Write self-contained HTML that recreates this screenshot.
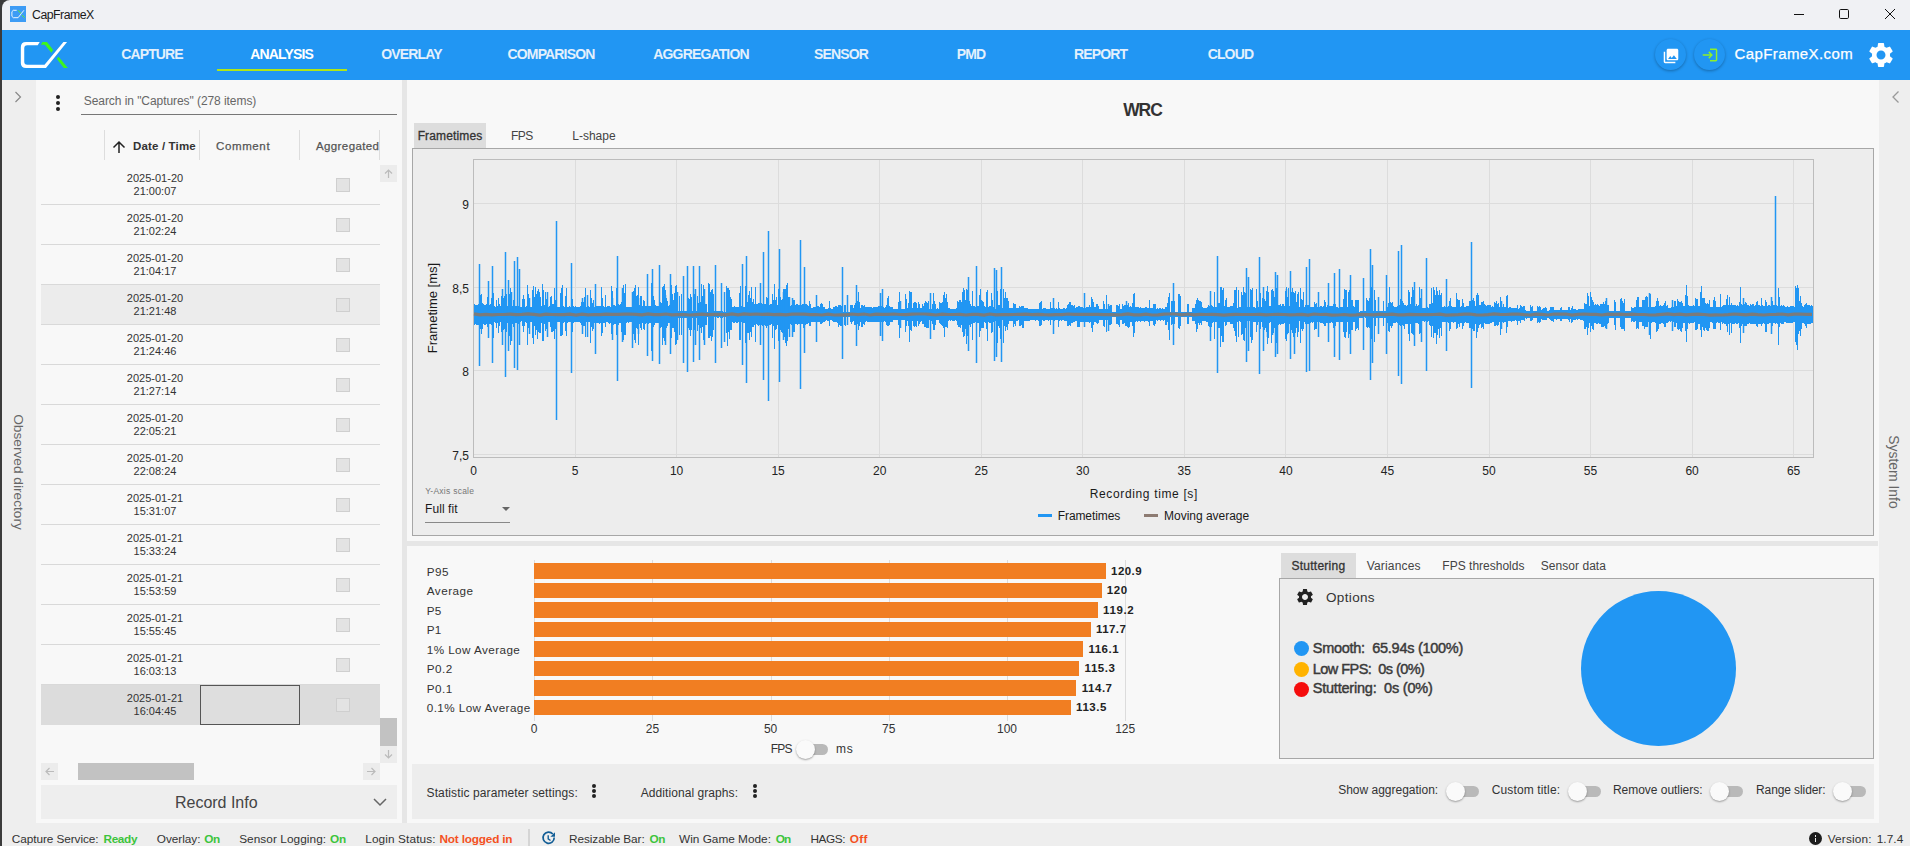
<!DOCTYPE html>
<html><head><meta charset="utf-8">
<style>
*{box-sizing:border-box;margin:0;padding:0}
html,body{width:1910px;height:846px;overflow:hidden;background:#eeeeee;font-family:"Liberation Sans",sans-serif;color:#333}
.a{position:absolute}
#edge{left:0;top:0;width:2px;height:846px;background:#3b3b3b}
#title{left:2px;top:0;width:1908px;height:30px;background:#f0f1f4;border-top-left-radius:8px}
#nav{left:2px;top:30px;width:1908px;height:50px;background:#2196f3}
.nv{position:absolute;top:46px;font-size:14px;font-weight:bold;color:#e3f0fc;white-space:nowrap;transform:translateX(-50%);letter-spacing:-0.85px}
#strip{left:2px;top:80px;width:34px;height:743px;background:#eeeeee}
#lp{left:36px;top:80px;width:366px;height:743px;background:#f8f8f8}
#sep{left:402px;top:80px;width:5px;height:743px;background:#e6e6e6}
#main{left:407px;top:80px;width:1472px;height:743px;background:#f8f8f8}
#rstrip{left:1879px;top:80px;width:31px;height:766px;background:#eeeeee}
.row{position:absolute;left:41px;width:339px;height:40px;border-bottom:1px solid #d9d9d9}
.row.hov{background:#ececec}
.row.sel{background:#dcdcdc;border-bottom:none}
.dt{position:absolute;left:64px;width:100px;top:7px;text-align:center;font-size:11px;line-height:13px;color:#333}
.cb{position:absolute;left:295px;top:13px;width:14px;height:14px;background:#e3e3e3;border:1px solid #cfcfcf}
.cmt{position:absolute;left:159px;top:0;width:100px;height:40px;border:1px solid #555;background:#dedede}
.st{position:absolute;top:831px;font-size:12px;color:#333;white-space:nowrap}
.g{color:#3cc43c;font-weight:bold}
.r{color:#f4511e;font-weight:bold}
.tk{font-size:12px;color:#222;white-space:nowrap}
.lg{font-size:14px;color:#333;white-space:nowrap;font-weight:bold;-webkit-text-stroke:0}
.dot3 i{display:block;width:4px;height:4px;border-radius:50%;background:#222;margin-bottom:1px}
.tg{font-size:12px;color:#333;white-space:nowrap}
.tr{width:28px;height:11px;border-radius:6px;background:#b9b9b9}
.kn{width:19px;height:19px;border-radius:50%;background:#fafafa;box-shadow:0 1px 2px rgba(0,0,0,.35)}
.bl{font-size:12px;color:#333;white-space:nowrap}
.bv{font-size:12px;color:#222;font-weight:bold;white-space:nowrap}
</style></head><body>
<div class="a" id="edge"></div>
<div class="a" style="left:0;top:0;width:10px;height:10px;background:#3b3b3b"></div>
<div class="a" id="title"></div>
<div class="a" id="nav"></div>
<!-- title bar -->
<div class="a" style="left:10px;top:6px;width:16px;height:16px;background:#3d9cf5"></div>
<svg class="a" style="left:10px;top:6px" width="16" height="16" viewBox="0 0 16 16">
 <path d="M6.7 4.3H3.3L1.9 5.7v4.6l1.4 1.4H8.1L13.9 4.3" fill="none" stroke="#fff" stroke-width="0.9"/>
 <path d="M8.1 4.3l2.7 3M12 9.1l2.6 2.6" fill="none" stroke="#5cf02a" stroke-width="1"/>
</svg>
<div class="a" style="left:32px;top:8px;font-size:12.3px;color:#1a1a1a;letter-spacing:-0.5px">CapFrameX</div>
<svg class="a" style="left:1790px;top:6px" width="110" height="18" viewBox="0 0 110 18">
 <path d="M4 8.5h10" stroke="#111" stroke-width="1"/>
 <rect x="49.5" y="3.5" width="9" height="9" rx="1.2" fill="none" stroke="#111" stroke-width="1"/>
 <path d="M95 3l10 10M105 3l-10 10" stroke="#111" stroke-width="1"/>
</svg>
<!-- logo -->
<svg class="a" style="left:16px;top:38px" width="56" height="34" viewBox="0 0 56 34">
 <path fill="#fff" d="M23.72 4.02H10.05Q4.82 4.02 4.82 9.25V24.92Q4.82 29.95 10.05 29.95H29.95L51.06 4.02H47.44L28.54 26.73H11.26Q8.24 26.73 8.24 23.72V10.25Q8.24 7.24 11.26 7.24H21.71Z"/>
 <path fill="#3ef51e" d="M24.92 6.63L26.53 4.02H30.95L37.19 12.06L35.38 14.87L28.94 6.83Z"/>
 <path fill="#3ef51e" d="M40.8 20.7L42.61 18.69L51.86 29.95H47.84Z"/>
</svg>
<div class="nv" style="left:152px">CAPTURE</div>
<div class="nv" style="left:281.7px;color:#fff">ANALYSIS</div>
<div class="a" style="left:217px;top:69px;width:130px;height:2px;background:#b0e617"></div>
<div class="nv" style="left:411.5px">OVERLAY</div>
<div class="nv" style="left:551px">COMPARISON</div>
<div class="nv" style="left:701px">AGGREGATION</div>
<div class="nv" style="left:841px">SENSOR</div>
<div class="nv" style="left:971px">PMD</div>
<div class="nv" style="left:1100.7px">REPORT</div>
<div class="nv" style="left:1230.4px">CLOUD</div>
<div class="a" style="left:1655px;top:39px;width:31px;height:31px;border-radius:50%;background:#2196f3;box-shadow:0 1px 3px rgba(0,0,0,.3)"></div>
<div class="a" style="left:1694px;top:39px;width:31px;height:31px;border-radius:50%;background:#2196f3;box-shadow:0 1px 3px rgba(0,0,0,.3)"></div>
<div class="a" style="left:1734.5px;top:45px;font-size:15px;color:#fff;letter-spacing:0.4px;-webkit-text-stroke:0.25px #fff">CapFrameX.com</div>

<svg class="a" style="left:1663px;top:48px" width="16" height="16" viewBox="1 1 22 22"><path fill="#fff" d="M22 16V4c0-1.1-.9-2-2-2H8c-1.1 0-2 .9-2 2v12c0 1.1.9 2 2 2h12c1.1 0 2-.9 2-2zm-11-4l2.03 2.71L16 11l4 5H8l3-4zM2 6v14c0 1.1.9 2 2 2h14v-2H4V6H2z"/></svg>
<svg class="a" style="left:1702px;top:47px" width="16" height="16" viewBox="1 1 22 22"><path fill="#8ef02a" d="M11 7L9.6 8.4l2.6 2.6H2v2h10.2l-2.6 2.6L11 17l5-5-5-5zm9 12h-8v2h8c1.1 0 2-.9 2-2V5c0-1.1-.9-2-2-2h-8v2h8v14z"/></svg>
<svg class="a" style="left:1866px;top:40px" width="30" height="30" viewBox="0 0 24 24"><path fill="#fff" d="M19.14 12.94c.04-.3.06-.61.06-.94 0-.32-.02-.64-.07-.94l2.03-1.58a.49.49 0 0 0 .12-.61l-1.92-3.32a.488.488 0 0 0-.59-.22l-2.39.96c-.5-.38-1.03-.7-1.62-.94l-.36-2.54a.484.484 0 0 0-.48-.41h-3.84c-.24 0-.43.17-.47.41l-.36 2.54c-.59.24-1.13.57-1.62.94l-2.39-.96c-.22-.08-.47 0-.59.22L2.74 8.87c-.12.21-.08.47.12.61l2.03 1.58c-.05.3-.09.63-.09.94s.02.64.07.94l-2.03 1.58a.49.49 0 0 0-.12.61l1.92 3.32c.12.22.37.29.59.22l2.39-.96c.5.38 1.03.7 1.62.94l.36 2.54c.05.24.24.41.48.41h3.84c.24 0 .44-.17.47-.41l.36-2.54c.59-.24 1.13-.56 1.62-.94l2.39.96c.22.08.47 0 .59-.22l1.92-3.32c.12-.22.07-.47-.12-.61l-2.01-1.58zM12 15.6c-1.98 0-3.6-1.62-3.6-3.6s1.62-3.6 3.6-3.6 3.6 1.62 3.6 3.6-1.62 3.6-3.6 3.6z"/></svg>
<div class="a" id="strip"></div>
<div class="a" id="lp"></div>
<div class="a" id="sep"></div>
<div class="a" id="main"></div>
<div class="a" id="rstrip"></div>

<div class="row" style="top:165px"><div class="dt">2025-01-20<br>21:00:07</div><div class="cb"></div></div>
<div class="row" style="top:205px"><div class="dt">2025-01-20<br>21:02:24</div><div class="cb"></div></div>
<div class="row" style="top:245px"><div class="dt">2025-01-20<br>21:04:17</div><div class="cb"></div></div>
<div class="row hov" style="top:285px"><div class="dt">2025-01-20<br>21:21:48</div><div class="cb"></div></div>
<div class="row" style="top:325px"><div class="dt">2025-01-20<br>21:24:46</div><div class="cb"></div></div>
<div class="row" style="top:365px"><div class="dt">2025-01-20<br>21:27:14</div><div class="cb"></div></div>
<div class="row" style="top:405px"><div class="dt">2025-01-20<br>22:05:21</div><div class="cb"></div></div>
<div class="row" style="top:445px"><div class="dt">2025-01-20<br>22:08:24</div><div class="cb"></div></div>
<div class="row" style="top:485px"><div class="dt">2025-01-21<br>15:31:07</div><div class="cb"></div></div>
<div class="row" style="top:525px"><div class="dt">2025-01-21<br>15:33:24</div><div class="cb"></div></div>
<div class="row" style="top:565px"><div class="dt">2025-01-21<br>15:53:59</div><div class="cb"></div></div>
<div class="row" style="top:605px"><div class="dt">2025-01-21<br>15:55:45</div><div class="cb"></div></div>
<div class="row" style="top:645px"><div class="dt">2025-01-21<br>16:03:13</div><div class="cb"></div></div>
<div class="row sel" style="top:685px"><div class="dt">2025-01-21<br>16:04:45</div><div class="cb"></div><div class="cmt"></div></div>

<!-- status bar -->
<div class="a" style="left:528px;top:829px;width:1.5px;height:17px;background:#d5d5d5"></div>
<svg class="a" style="left:541px;top:831px" width="16" height="15" viewBox="0 0 16 15"><path d="M13.2 6.5A5.6 5.6 0 1 1 11.8 3" fill="none" stroke="#135e96" stroke-width="1.7"/><path d="M14 1.2v4.6H9.4z" fill="#135e96"/><path d="M7.2 4.3v3.6l2.3 1.6" fill="none" stroke="#135e96" stroke-width="1.4"/></svg>
<div class="a" style="left:1809px;top:832px;width:13px;height:13px;border-radius:50%;background:#1e1e1e"></div>
<div class="a" style="left:1814.6px;top:835px;width:1.8px;height:1.8px;background:#eee"></div>
<div class="a" style="left:1814.6px;top:837.6px;width:1.8px;height:4.6px;background:#eee"></div>

<!-- left panel header -->
<svg class="a" style="left:13px;top:91px" width="10" height="12" viewBox="0 0 10 12"><path d="M2.5 1l5 5-5 5" fill="none" stroke="#888" stroke-width="1.2"/></svg>
<div class="a" style="left:56px;top:95px;width:4px;height:4px;border-radius:50%;background:#222"></div>
<div class="a" style="left:56px;top:101px;width:4px;height:4px;border-radius:50%;background:#222"></div>
<div class="a" style="left:56px;top:107px;width:4px;height:4px;border-radius:50%;background:#222"></div>
<div class="a" style="left:81px;top:114px;width:316px;height:1px;background:#777"></div>
<div class="a" style="left:104px;top:130px;width:1px;height:30px;background:#ddd"></div>
<div class="a" style="left:199px;top:130px;width:1px;height:30px;background:#ddd"></div>
<div class="a" style="left:299px;top:130px;width:1px;height:30px;background:#ddd"></div>
<div class="a" style="left:379px;top:130px;width:1px;height:30px;background:#ddd"></div>
<svg class="a" style="left:112px;top:140px" width="14" height="14" viewBox="0 0 14 14"><path d="M7 13V2M1.5 7.5L7 2l5.5 5.5" fill="none" stroke="#222" stroke-width="1.5"/></svg>
<div class="a" style="left:380px;top:165px;width:17px;height:17px;background:#ececec"></div>
<svg class="a" style="left:383px;top:168px" width="11" height="11" viewBox="0 0 11 11"><path d="M5.5 10V2M2 5.5L5.5 2 9 5.5" fill="none" stroke="#bbb" stroke-width="1.2"/></svg>
<div class="a" style="left:380px;top:718px;width:17px;height:28px;background:#c2c2c2"></div>
<div class="a" style="left:380px;top:746px;width:17px;height:17px;background:#ececec"></div>
<svg class="a" style="left:383px;top:749px" width="11" height="11" viewBox="0 0 11 11"><path d="M5.5 1v8M2 5.5L5.5 9 9 5.5" fill="none" stroke="#bbb" stroke-width="1.2"/></svg>
<div class="a" style="left:41px;top:763px;width:17px;height:17px;background:#ececec"></div>
<svg class="a" style="left:44px;top:766px" width="11" height="11" viewBox="0 0 11 11"><path d="M10 5.5H2M5.5 2L2 5.5 5.5 9" fill="none" stroke="#bbb" stroke-width="1.2"/></svg>
<div class="a" style="left:78px;top:763px;width:116px;height:17px;background:#c2c2c2"></div>
<div class="a" style="left:363px;top:763px;width:17px;height:17px;background:#ececec"></div>
<svg class="a" style="left:366px;top:766px" width="11" height="11" viewBox="0 0 11 11"><path d="M1 5.5h8M5.5 2L9 5.5 5.5 9" fill="none" stroke="#bbb" stroke-width="1.2"/></svg>
<div class="a" style="left:41px;top:785px;width:356px;height:34px;background:#eeeeee"></div>
<svg class="a" style="left:372px;top:797px" width="16" height="10" viewBox="0 0 16 10"><path d="M2 2l6 6 6-6" fill="none" stroke="#666" stroke-width="1.5"/></svg>
<div class="a" style="left:-40px;top:464px;width:116px;transform:rotate(90deg);font-size:13.7px;color:#666;white-space:nowrap;text-align:center;line-height:16px">Observed directory</div>
<!-- right strip -->
<svg class="a" style="left:1890px;top:90px" width="12" height="14" viewBox="0 0 12 14"><path d="M8.5 1.5L3 7l5.5 5.5" fill="none" stroke="#999" stroke-width="1.3"/></svg>
<div class="a" style="left:1857px;top:464px;width:74px;transform:rotate(90deg);font-size:13.9px;color:#666;white-space:nowrap;text-align:center;line-height:16px">System Info</div>

<!-- main header -->
<div class="a" style="left:414px;top:123px;width:72px;height:25px;background:#dddddd"></div>
<!-- chart box -->
<div class="a" style="left:412px;top:148px;width:1462px;height:388px;background:#ededed;border:1px solid #a7a7a7"></div>
<div class="a" style="left:473px;top:159px;height:299px;border:1px solid #bcbcbc;width:1341px"></div>
<div class="a tk" style="left:473.5px;top:464px;transform:translateX(-50%)">0</div>
<div class="a" style="left:574.5px;top:160px;width:1px;height:297px;background:#dcdcdc"></div>
<div class="a tk" style="left:575.0px;top:464px;transform:translateX(-50%)">5</div>
<div class="a" style="left:676.1px;top:160px;width:1px;height:297px;background:#dcdcdc"></div>
<div class="a tk" style="left:676.6px;top:464px;transform:translateX(-50%)">10</div>
<div class="a" style="left:777.6px;top:160px;width:1px;height:297px;background:#dcdcdc"></div>
<div class="a tk" style="left:778.1px;top:464px;transform:translateX(-50%)">15</div>
<div class="a" style="left:879.2px;top:160px;width:1px;height:297px;background:#dcdcdc"></div>
<div class="a tk" style="left:879.7px;top:464px;transform:translateX(-50%)">20</div>
<div class="a" style="left:980.8px;top:160px;width:1px;height:297px;background:#dcdcdc"></div>
<div class="a tk" style="left:981.2px;top:464px;transform:translateX(-50%)">25</div>
<div class="a" style="left:1082.3px;top:160px;width:1px;height:297px;background:#dcdcdc"></div>
<div class="a tk" style="left:1082.8px;top:464px;transform:translateX(-50%)">30</div>
<div class="a" style="left:1183.8px;top:160px;width:1px;height:297px;background:#dcdcdc"></div>
<div class="a tk" style="left:1184.3px;top:464px;transform:translateX(-50%)">35</div>
<div class="a" style="left:1285.4px;top:160px;width:1px;height:297px;background:#dcdcdc"></div>
<div class="a tk" style="left:1285.9px;top:464px;transform:translateX(-50%)">40</div>
<div class="a" style="left:1386.9px;top:160px;width:1px;height:297px;background:#dcdcdc"></div>
<div class="a tk" style="left:1387.4px;top:464px;transform:translateX(-50%)">45</div>
<div class="a" style="left:1488.5px;top:160px;width:1px;height:297px;background:#dcdcdc"></div>
<div class="a tk" style="left:1489.0px;top:464px;transform:translateX(-50%)">50</div>
<div class="a" style="left:1590.0px;top:160px;width:1px;height:297px;background:#dcdcdc"></div>
<div class="a tk" style="left:1590.5px;top:464px;transform:translateX(-50%)">55</div>
<div class="a" style="left:1691.6px;top:160px;width:1px;height:297px;background:#dcdcdc"></div>
<div class="a tk" style="left:1692.1px;top:464px;transform:translateX(-50%)">60</div>
<div class="a" style="left:1793.1px;top:160px;width:1px;height:297px;background:#dcdcdc"></div>
<div class="a tk" style="left:1793.6px;top:464px;transform:translateX(-50%)">65</div>
<div class="a" style="left:474px;top:203.4px;width:1339px;height:1px;background:#dcdcdc"></div>
<div class="a tk" style="right:1441px;top:198.4px">9</div>
<div class="a" style="left:474px;top:286.6px;width:1339px;height:1px;background:#dcdcdc"></div>
<div class="a tk" style="right:1441px;top:281.6px">8,5</div>
<div class="a" style="left:474px;top:370.3px;width:1339px;height:1px;background:#dcdcdc"></div>
<div class="a tk" style="right:1441px;top:365.3px">8</div>
<div class="a" style="left:474px;top:453.5px;width:1339px;height:1px;background:#dcdcdc"></div>
<div class="a tk" style="right:1441px;top:448.5px">7,5</div>
<div class="a" style="left:425px;top:299.7px;width:16px;height:16px;transform:rotate(-90deg);font-size:13px;color:#1a1a1a;line-height:16px"><span style="position:absolute;left:50%;top:50%;transform:translate(-50%,-50%);white-space:nowrap">Frametime [ms]</span></div>
<svg class="a" style="left:501px;top:506px" width="10" height="6" viewBox="0 0 10 6"><path d="M1 1h8L5 5z" fill="#666"/></svg>
<div class="a" style="left:425px;top:522px;width:85px;height:1px;background:#888"></div>
<div class="a" style="left:1038px;top:514px;width:14px;height:3px;background:#2196f3"></div>
<div class="a" style="left:1144px;top:514px;width:14px;height:3px;background:#8d7b72"></div>
<div class="a" style="left:83.76px;top:95.04px;font-size:12px;line-height:12px;font-weight:400;color:#666;letter-spacing:-0.065px;white-space:pre;">Search in "Captures" (278 items)</div>
<div class="a" style="left:132.98px;top:140.87px;font-size:11.5px;line-height:11.5px;font-weight:700;color:#333;letter-spacing:0.158px;white-space:pre;">Date / Time</div>
<div class="a" style="left:215.98px;top:141.17px;font-size:11.5px;line-height:11.5px;font-weight:400;color:#555;letter-spacing:0.629px;white-space:pre;-webkit-text-stroke:0.25px #555;">Comment</div>
<div class="a" style="left:315.98px;top:141.17px;font-size:11.5px;line-height:11.5px;font-weight:400;color:#555;letter-spacing:0.396px;white-space:pre;-webkit-text-stroke:0.25px #555;">Aggregated</div>
<div class="a" style="left:1123.21px;top:101.89px;font-size:17.5px;line-height:17.5px;font-weight:700;color:#333;letter-spacing:-1.111px;white-space:pre;">WRC</div>
<div class="a" style="left:417.66px;top:129.74px;font-size:12px;line-height:12px;font-weight:400;color:#333;letter-spacing:0.137px;white-space:pre;-webkit-text-stroke:0.3px #333;">Frametimes</div>
<div class="a" style="left:511.06px;top:129.74px;font-size:12px;line-height:12px;font-weight:400;color:#444;letter-spacing:-0.582px;white-space:pre;">FPS</div>
<div class="a" style="left:572.26px;top:129.74px;font-size:12px;line-height:12px;font-weight:400;color:#444;letter-spacing:0.001px;white-space:pre;">L-shape</div>
<div class="a" style="left:1089.66px;top:487.94px;font-size:12px;line-height:12px;font-weight:400;color:#1a1a1a;letter-spacing:0.646px;white-space:pre;">Recording time [s]</div>
<div class="a" style="left:1057.76px;top:509.54px;font-size:12px;line-height:12px;font-weight:400;color:#1a1a1a;letter-spacing:-0.096px;white-space:pre;">Frametimes</div>
<div class="a" style="left:1164.06px;top:509.54px;font-size:12px;line-height:12px;font-weight:400;color:#1a1a1a;letter-spacing:-0.024px;white-space:pre;">Moving average</div>
<div class="a" style="left:425.22px;top:486.80px;font-size:8.5px;line-height:8.5px;font-weight:400;color:#777;letter-spacing:0.253px;white-space:pre;">Y-Axis scale</div>
<div class="a" style="left:425.06px;top:503.04px;font-size:12px;line-height:12px;font-weight:400;color:#1a1a1a;letter-spacing:0.066px;white-space:pre;">Full fit</div>
<div class="a" style="left:174.98px;top:794.76px;font-size:16px;line-height:16px;font-weight:400;color:#444;letter-spacing:-0.008px;white-space:pre;">Record Info</div>
<!-- horizontal separator -->
<div class="a" style="left:407px;top:541px;width:1471px;height:5px;background:#e6e6e6"></div>

<!-- bar chart -->
<div class="a" style="left:652.4px;top:560px;width:1px;height:161px;background:#dcdcdc"></div>
<div class="a" style="left:770.6px;top:560px;width:1px;height:161px;background:#dcdcdc"></div>
<div class="a" style="left:888.8px;top:560px;width:1px;height:161px;background:#dcdcdc"></div>
<div class="a" style="left:1007.0px;top:560px;width:1px;height:161px;background:#dcdcdc"></div>
<div class="a" style="left:1125.2px;top:560px;width:1px;height:161px;background:#dcdcdc"></div>
<div class="a tk" style="left:534.2px;top:722px;transform:translateX(-50%);color:#333">0</div>
<div class="a tk" style="left:652.4px;top:722px;transform:translateX(-50%);color:#333">25</div>
<div class="a tk" style="left:770.6px;top:722px;transform:translateX(-50%);color:#333">50</div>
<div class="a tk" style="left:888.8px;top:722px;transform:translateX(-50%);color:#333">75</div>
<div class="a tk" style="left:1007.0px;top:722px;transform:translateX(-50%);color:#333">100</div>
<div class="a tk" style="left:1125.2px;top:722px;transform:translateX(-50%);color:#333">125</div>
<div class="a" style="left:534px;top:560px;width:1px;height:161px;background:#dcdcdc"></div>
<div class="a" style="left:534.2px;top:563.2px;width:571.6px;height:15.6px;background:#f17e22"></div>
<div class="a" style="left:534.2px;top:582.7px;width:567.4px;height:15.6px;background:#f17e22"></div>
<div class="a" style="left:534.2px;top:602.2px;width:563.6px;height:15.6px;background:#f17e22"></div>
<div class="a" style="left:534.2px;top:621.7px;width:556.5px;height:15.6px;background:#f17e22"></div>
<div class="a" style="left:534.2px;top:641.2px;width:548.9px;height:15.6px;background:#f17e22"></div>
<div class="a" style="left:534.2px;top:660.7px;width:545.1px;height:15.6px;background:#f17e22"></div>
<div class="a" style="left:534.2px;top:680.2px;width:542.3px;height:15.6px;background:#f17e22"></div>
<div class="a" style="left:534.2px;top:699.7px;width:536.6px;height:15.6px;background:#f17e22"></div>
<div class="a" style="left:800px;top:744px;width:28px;height:11px;border-radius:6px;background:#b9b9b9"></div>
<div class="a" style="left:796px;top:740px;width:19px;height:19px;border-radius:50%;background:#fafafa;box-shadow:0 1px 2px rgba(0,0,0,.35)"></div>
<!-- stuttering panel -->
<div class="a" style="left:1281px;top:553px;width:75px;height:25px;background:#dddddd"></div>
<div class="a" style="left:1279px;top:578px;width:595px;height:181px;background:#ededed;border:1px solid #a7a7a7"></div>
<svg class="a" style="left:1295.2px;top:587.1px" width="20" height="20" viewBox="0 0 24 24"><path fill="#222" d="M19.14 12.94c.04-.3.06-.61.06-.94 0-.32-.02-.64-.07-.94l2.030-1.58a.49.49 0 0 0 .12-.61l-1.92-3.32a.488.488 0 0 0-.59-.22l-2.39.96c-.5-.38-1.03-.7-1.62-.94l-.36-2.54a.484.484 0 0 0-.48-.41h-3.84c-.24 0-.43.17-.47.41l-.36 2.54c-.59.24-1.13.57-1.62.94l-2.39-.96c-.22-.08-.47 0-.59.22L2.74 8.87c-.12.21-.08.47.12.61l2.03 1.58c-.05.3-.09.63-.09.94s.02.64.07.94l-2.03 1.58a.49.49 0 0 0-.12.61l1.92 3.32c.12.22.37.29.59.22l2.39-.96c.5.38 1.03.7 1.62.94l.36 2.54c.05.24.24.41.48.41h3.84c.24 0 .44-.17.47-.41l.36-2.54c.59-.24 1.13-.56 1.62-.94l2.39.96c.22.08.47 0 .59-.22l1.92-3.32c.12-.22.07-.47-.12-.61l-2.01-1.58zM12 15.6c-1.98 0-3.6-1.62-3.6-3.6s1.620-3.6 3.6-3.6 3.6 1.62 3.6 3.6-1.62 3.6-3.6 3.6z"/></svg>
<div class="a" style="left:1293.5px;top:640.5px;width:15px;height:15px;border-radius:50%;background:#2196f3"></div>
<div class="a" style="left:1293.5px;top:661.5px;width:15px;height:15px;border-radius:50%;background:#ffb300"></div>
<div class="a" style="left:1293.5px;top:682px;width:15px;height:15px;border-radius:50%;background:#f50d0d"></div>
<div class="a" style="left:1581px;top:591px;width:155px;height:155px;border-radius:50%;background:#2196f3"></div>
<!-- bottom toolbar -->
<div class="a" style="left:412px;top:764px;width:1462px;height:55px;background:#ededed"></div>
<div class="a dot3" style="left:592px;top:784px"><i></i><i></i><i></i></div>
<div class="a dot3" style="left:752.5px;top:784px"><i></i><i></i><i></i></div>

<div class="a tr" style="left:1451px;top:786px"></div><div class="a kn" style="left:1446px;top:782px"></div>

<div class="a tr" style="left:1573px;top:786px"></div><div class="a kn" style="left:1568px;top:782px"></div>

<div class="a tr" style="left:1715px;top:786px"></div><div class="a kn" style="left:1710px;top:782px"></div>

<div class="a tr" style="left:1838px;top:786px"></div><div class="a kn" style="left:1833px;top:782px"></div>

<div class="a" style="left:770.86px;top:743.14px;font-size:12px;line-height:12px;font-weight:400;color:#333;letter-spacing:-0.832px;white-space:pre;">FPS</div>
<div class="a" style="left:835.96px;top:743.14px;font-size:12px;line-height:12px;font-weight:400;color:#333;letter-spacing:0.880px;white-space:pre;">ms</div>
<div class="a" style="left:1291.56px;top:559.94px;font-size:12px;line-height:12px;font-weight:400;color:#333;letter-spacing:0.245px;white-space:pre;-webkit-text-stroke:0.3px #333;">Stuttering</div>
<div class="a" style="left:1366.66px;top:559.94px;font-size:12px;line-height:12px;font-weight:400;color:#444;letter-spacing:0.187px;white-space:pre;">Variances</div>
<div class="a" style="left:1442.36px;top:559.94px;font-size:12px;line-height:12px;font-weight:400;color:#444;letter-spacing:0.003px;white-space:pre;">FPS thresholds</div>
<div class="a" style="left:1540.76px;top:559.94px;font-size:12px;line-height:12px;font-weight:400;color:#444;letter-spacing:0.046px;white-space:pre;">Sensor data</div>
<div class="a" style="left:1325.99px;top:590.57px;font-size:13.5px;line-height:13.5px;font-weight:400;color:#333;letter-spacing:0.347px;white-space:pre;">Options</div>
<div class="a" style="left:1312.75px;top:640.63px;font-size:14.5px;line-height:14.5px;font-weight:400;color:#3a3a3a;letter-spacing:-0.280px;white-space:pre;-webkit-text-stroke:0.45px #3a3a3a;">Smooth:  65.94s (100%)</div>
<div class="a" style="left:1312.75px;top:661.53px;font-size:14.5px;line-height:14.5px;font-weight:400;color:#3a3a3a;letter-spacing:-0.542px;white-space:pre;-webkit-text-stroke:0.45px #3a3a3a;">Low FPS:  0s (0%)</div>
<div class="a" style="left:1312.75px;top:681.43px;font-size:14.5px;line-height:14.5px;font-weight:400;color:#3a3a3a;letter-spacing:-0.216px;white-space:pre;-webkit-text-stroke:0.45px #3a3a3a;">Stuttering:  0s (0%)</div>
<div class="a" style="left:426.56px;top:786.64px;font-size:12px;line-height:12px;font-weight:400;color:#333;letter-spacing:0.111px;white-space:pre;">Statistic parameter settings:</div>
<div class="a" style="left:640.66px;top:786.64px;font-size:12px;line-height:12px;font-weight:400;color:#333;letter-spacing:0.077px;white-space:pre;">Additional graphs:</div>
<div class="a" style="left:1338.16px;top:784.44px;font-size:12px;line-height:12px;font-weight:400;color:#333;letter-spacing:-0.006px;white-space:pre;">Show aggregation:</div>
<div class="a" style="left:1491.66px;top:784.44px;font-size:12px;line-height:12px;font-weight:400;color:#333;letter-spacing:0.141px;white-space:pre;">Custom title:</div>
<div class="a" style="left:1612.96px;top:784.44px;font-size:12px;line-height:12px;font-weight:400;color:#333;letter-spacing:-0.031px;white-space:pre;">Remove outliers:</div>
<div class="a" style="left:1756.06px;top:784.44px;font-size:12px;line-height:12px;font-weight:400;color:#333;letter-spacing:-0.103px;white-space:pre;">Range slider:</div>
<div class="a" style="left:426.77px;top:565.90px;font-size:11.7px;line-height:11.7px;font-weight:400;color:#333;letter-spacing:0.528px;white-space:pre;">P95</div>
<div class="a" style="left:1111.10px;top:565.87px;font-size:11.5px;line-height:11.5px;font-weight:700;color:#222;letter-spacing:0.438px;white-space:pre;">120.9</div>
<div class="a" style="left:426.77px;top:585.35px;font-size:11.7px;line-height:11.7px;font-weight:400;color:#333;letter-spacing:0.504px;white-space:pre;">Average</div>
<div class="a" style="left:1106.84px;top:585.32px;font-size:11.5px;line-height:11.5px;font-weight:700;color:#222;letter-spacing:0.624px;white-space:pre;">120</div>
<div class="a" style="left:426.77px;top:604.80px;font-size:11.7px;line-height:11.7px;font-weight:400;color:#333;letter-spacing:0.156px;white-space:pre;">P5</div>
<div class="a" style="left:1103.06px;top:604.77px;font-size:11.5px;line-height:11.5px;font-weight:700;color:#222;letter-spacing:0.620px;white-space:pre;">119.2</div>
<div class="a" style="left:426.77px;top:624.25px;font-size:11.7px;line-height:11.7px;font-weight:400;color:#333;letter-spacing:0.156px;white-space:pre;">P1</div>
<div class="a" style="left:1095.97px;top:624.22px;font-size:11.5px;line-height:11.5px;font-weight:700;color:#222;letter-spacing:0.420px;white-space:pre;">117.7</div>
<div class="a" style="left:426.77px;top:643.70px;font-size:11.7px;line-height:11.7px;font-weight:400;color:#333;letter-spacing:0.426px;white-space:pre;">1% Low Average</div>
<div class="a" style="left:1088.40px;top:643.67px;font-size:11.5px;line-height:11.5px;font-weight:700;color:#222;letter-spacing:0.520px;white-space:pre;">116.1</div>
<div class="a" style="left:426.77px;top:663.15px;font-size:11.7px;line-height:11.7px;font-weight:400;color:#333;letter-spacing:0.469px;white-space:pre;">P0.2</div>
<div class="a" style="left:1084.62px;top:663.12px;font-size:11.5px;line-height:11.5px;font-weight:700;color:#222;letter-spacing:0.520px;white-space:pre;">115.3</div>
<div class="a" style="left:426.77px;top:682.60px;font-size:11.7px;line-height:11.7px;font-weight:400;color:#333;letter-spacing:0.469px;white-space:pre;">P0.1</div>
<div class="a" style="left:1081.78px;top:682.57px;font-size:11.5px;line-height:11.5px;font-weight:700;color:#222;letter-spacing:0.520px;white-space:pre;">114.7</div>
<div class="a" style="left:426.77px;top:702.05px;font-size:11.7px;line-height:11.7px;font-weight:400;color:#333;letter-spacing:0.414px;white-space:pre;">0.1% Low Average</div>
<div class="a" style="left:1076.11px;top:702.02px;font-size:11.5px;line-height:11.5px;font-weight:700;color:#222;letter-spacing:0.520px;white-space:pre;">113.5</div>

<div class="a" style="left:11.77px;top:833.61px;font-size:11.8px;line-height:11.8px;font-weight:400;color:#333;letter-spacing:-0.074px;white-space:pre;">Capture Service:</div>
<div class="a" style="left:103.47px;top:833.61px;font-size:11.8px;line-height:11.8px;font-weight:700;color:#3cc43c;letter-spacing:-0.340px;white-space:pre;">Ready</div>
<div class="a" style="left:156.77px;top:833.61px;font-size:11.8px;line-height:11.8px;font-weight:400;color:#333;letter-spacing:-0.023px;white-space:pre;">Overlay:</div>
<div class="a" style="left:204.27px;top:833.61px;font-size:11.8px;line-height:11.8px;font-weight:700;color:#3cc43c;letter-spacing:-0.529px;white-space:pre;">On</div>
<div class="a" style="left:239.17px;top:833.61px;font-size:11.8px;line-height:11.8px;font-weight:400;color:#333;letter-spacing:0.074px;white-space:pre;">Sensor Logging:</div>
<div class="a" style="left:329.97px;top:833.61px;font-size:11.8px;line-height:11.8px;font-weight:700;color:#3cc43c;letter-spacing:-0.129px;white-space:pre;">On</div>
<div class="a" style="left:365.27px;top:833.61px;font-size:11.8px;line-height:11.8px;font-weight:400;color:#333;letter-spacing:0.116px;white-space:pre;">Login Status:</div>
<div class="a" style="left:439.47px;top:833.61px;font-size:11.8px;line-height:11.8px;font-weight:700;color:#f4511e;letter-spacing:-0.191px;white-space:pre;">Not logged in</div>
<div class="a" style="left:569.07px;top:833.61px;font-size:11.8px;line-height:11.8px;font-weight:400;color:#333;letter-spacing:-0.081px;white-space:pre;">Resizable Bar:</div>
<div class="a" style="left:649.47px;top:833.61px;font-size:11.8px;line-height:11.8px;font-weight:700;color:#3cc43c;letter-spacing:-0.329px;white-space:pre;">On</div>
<div class="a" style="left:679.07px;top:833.61px;font-size:11.8px;line-height:11.8px;font-weight:400;color:#333;letter-spacing:0.005px;white-space:pre;">Win Game Mode:</div>
<div class="a" style="left:775.67px;top:833.61px;font-size:11.8px;line-height:11.8px;font-weight:700;color:#3cc43c;letter-spacing:-0.929px;white-space:pre;">On</div>
<div class="a" style="left:810.47px;top:833.61px;font-size:11.8px;line-height:11.8px;font-weight:400;color:#333;letter-spacing:-0.414px;white-space:pre;">HAGS:</div>
<div class="a" style="left:849.77px;top:833.61px;font-size:11.8px;line-height:11.8px;font-weight:700;color:#f4511e;letter-spacing:0.258px;white-space:pre;">Off</div>
<div class="a" style="left:1827.67px;top:833.61px;font-size:11.8px;line-height:11.8px;font-weight:400;color:#333;letter-spacing:0.189px;white-space:pre;">Version:</div>
<div class="a" style="left:1876.67px;top:833.61px;font-size:11.8px;line-height:11.8px;font-weight:400;color:#333;letter-spacing:0.103px;white-space:pre;">1.7.4</div>
<svg class="a" style="left:0;top:0" width="1910" height="846" viewBox="0 0 1910 846">
<g fill="none" stroke="#2196f3">
<path stroke-width="1" shape-rendering="crispEdges" d="M474.5 304V325M475.5 305V324M476.5 305V325M477.5 305V325M478.5 304V325M479.5 305V324M480.5 303V329M481.5 301V328M482.5 303V329M483.5 304V324M484.5 305V325M485.5 305V325M486.5 304V324M487.5 297V327M488.5 304V325M489.5 305V324M490.5 304V324M491.5 307V322M492.5 306V323M493.5 307V323M494.5 306V322M495.5 307V323M496.5 305V324M497.5 306V323M498.5 301V326M499.5 304V326M500.5 306V322M501.5 296V332M502.5 297V333M503.5 298V330M504.5 296V329M505.5 306V323M506.5 306V323M507.5 306V323M508.5 298V331M509.5 299V329M510.5 298V328M511.5 299V331M512.5 306V324M513.5 300V327M514.5 306V323M515.5 306V323M516.5 306V323M517.5 304V329M518.5 306V324M519.5 307V321M520.5 307V322M521.5 307V321M522.5 299V326M523.5 300V326M524.5 299V326M525.5 307V322M526.5 306V323M527.5 299V329M528.5 300V328M529.5 308V322M530.5 307V322M531.5 307V322M532.5 307V322M533.5 302V326M534.5 303V326M535.5 305V323M536.5 306V323M537.5 305V323M538.5 305V323M539.5 305V323M540.5 305V324M541.5 306V323M542.5 305V323M543.5 305V324M544.5 305V324M545.5 306V323M546.5 305V323M547.5 307V322M548.5 307V322M549.5 306V322M550.5 307V322M551.5 302V332M552.5 304V332M553.5 304V331M554.5 307V322M555.5 303V329M556.5 301V330M557.5 307V322M558.5 307V322M559.5 307V322M560.5 307V322M561.5 306V322M562.5 307V323M563.5 306V323M564.5 307V322M565.5 307V322M566.5 306V323M567.5 307V323M568.5 307V322M569.5 306V322M570.5 307V322M571.5 301V332M572.5 299V332M573.5 306V323M574.5 307V322M575.5 306V322M576.5 307V322M577.5 307V322M578.5 307V322M579.5 307V322M580.5 306V323M581.5 302V325M582.5 302V325M583.5 302V326M584.5 303V326M585.5 306V323M586.5 307V322M587.5 307V322M588.5 306V322M589.5 307V322M590.5 307V323M591.5 307V323M592.5 303V331M593.5 300V329M594.5 307V323M595.5 307V323M596.5 306V323M597.5 306V323M598.5 306V323M599.5 306V324M600.5 306V323M601.5 306V323M602.5 307V323M603.5 306V323M604.5 307V323M605.5 306V322M606.5 307V322M607.5 306V322M608.5 306V323M609.5 306V324M610.5 307V323M611.5 305V325M612.5 305V324M613.5 305V325M614.5 305V324M615.5 306V324M616.5 305V324M617.5 304V323M618.5 304V325M619.5 305V323M620.5 304V323M621.5 302V332M622.5 306V323M623.5 306V324M624.5 300V330M625.5 299V331M626.5 307V323M627.5 307V322M628.5 307V323M629.5 307V322M630.5 307V322M631.5 307V322M632.5 307V322M633.5 301V327M634.5 303V326M635.5 302V327M636.5 302V328M637.5 304V324M638.5 300V330M639.5 305V324M640.5 296V328M641.5 296V330M642.5 306V323M643.5 300V329M644.5 301V330M645.5 306V324M646.5 306V323M647.5 306V323M648.5 306V324M649.5 306V323M650.5 306V323M651.5 305V324M652.5 297V332M653.5 299V327M654.5 300V325M655.5 305V323M656.5 306V323M657.5 306V323M658.5 306V323M659.5 306V322M660.5 302V328M661.5 303V327M662.5 303V330M663.5 302V327M664.5 306V323M665.5 306V323M666.5 298V328M667.5 301V326M668.5 306V323M669.5 305V323M670.5 305V324M671.5 305V324M672.5 306V324M673.5 306V324M674.5 305V323M675.5 305V323M676.5 311V318M677.5 311V318M678.5 311V318M679.5 311V318M680.5 311V318M681.5 311V318M682.5 311V318M683.5 311V318M684.5 311V318M685.5 311V318M686.5 311V318M687.5 311V318M688.5 298V328M689.5 299V330M690.5 299V330M691.5 311V318M692.5 311V318M693.5 311V318M694.5 311V318M695.5 311V318M696.5 311V318M697.5 296V331M698.5 303V325M699.5 304V325M700.5 302V328M701.5 303V329M702.5 304V327M703.5 304V326M704.5 303V324M705.5 304V325M706.5 304V325M707.5 312V317M708.5 312V317M709.5 311V317M710.5 300V330M711.5 298V332M712.5 300V331M713.5 312V318M714.5 311V317M715.5 312V317M716.5 311V317M717.5 311V318M718.5 311V318M719.5 311V317M720.5 311V318M721.5 311V317M722.5 311V318M723.5 312V317M724.5 311V317M725.5 312V317M726.5 311V317M727.5 306V322M728.5 298V329M729.5 299V329M730.5 297V330M731.5 299V330M732.5 307V322M733.5 307V323M734.5 306V323M735.5 307V322M736.5 307V323M737.5 307V323M738.5 307V322M739.5 306V323M740.5 307V323M741.5 306V322M742.5 307V323M743.5 307V323M744.5 307V323M745.5 307V323M746.5 306V322M747.5 302V333M748.5 304V333M749.5 301V332M750.5 307V323M751.5 300V328M752.5 302V327M753.5 299V327M754.5 304V325M755.5 303V324M756.5 304V324M757.5 304V325M758.5 303V326M759.5 303V325M760.5 304V324M761.5 303V325M762.5 304V326M763.5 303V326M764.5 304V325M765.5 304V326M766.5 297V328M767.5 298V326M768.5 304V326M769.5 305V325M770.5 304V325M771.5 304V324M772.5 304V324M773.5 306V325M774.5 297V332M775.5 300V330M776.5 297V329M777.5 305V325M778.5 304V324M779.5 305V323M780.5 297V330M781.5 306V324M782.5 305V324M783.5 305V324M784.5 305V324M785.5 304V324M786.5 297V329M787.5 297V330M788.5 297V329M789.5 300V329M790.5 306V324M791.5 305V325M792.5 301V333M793.5 300V332M794.5 300V332M795.5 305V324M796.5 304V324M797.5 304V325M798.5 305V324M799.5 305V324M800.5 305V324M801.5 305V324M802.5 304V324M803.5 304V328M804.5 306V324M805.5 304V325M806.5 304V324M807.5 305V324M808.5 306V323M809.5 301V326M810.5 304V326M811.5 308V322M812.5 308V322M813.5 307V322M814.5 307V322M815.5 307V322M816.5 307V322M817.5 306V322M818.5 306V322M819.5 307V322M820.5 304V324M821.5 303V324M822.5 304V323M823.5 307V322M824.5 307V322M825.5 309V321M826.5 309V320M827.5 309V321M828.5 308V321M829.5 309V320M830.5 308V320M831.5 309V320M832.5 309V321M833.5 307V322M834.5 307V322M835.5 306V322M836.5 306V322M837.5 307V323M838.5 305V327M839.5 305V325M840.5 305V326M841.5 306V326M842.5 312V317M843.5 312V317M844.5 305V325M845.5 305V326M846.5 312V317M847.5 312V317M848.5 312V317M849.5 312V317M850.5 305V322M851.5 305V324M852.5 305V322M853.5 308V321M854.5 305V325M855.5 304V325M856.5 304V325M857.5 303V323M858.5 308V322M859.5 302V326M860.5 308V322M861.5 305V327M862.5 305V327M863.5 306V324M864.5 305V325M865.5 307V322M866.5 307V321M867.5 307V322M868.5 307V322M869.5 307V322M870.5 307V322M871.5 307V322M872.5 308V322M873.5 307V322M874.5 307V322M875.5 307V322M876.5 307V322M877.5 307V322M878.5 306V322M879.5 306V322M880.5 307V322M881.5 306V322M882.5 307V322M883.5 307V322M884.5 308V321M885.5 307V322M886.5 305V325M887.5 306V324M888.5 306V324M889.5 306V325M890.5 307V322M891.5 307V322M892.5 307V322M893.5 309V320M894.5 309V320M895.5 309V320M896.5 309V320M897.5 309V320M898.5 302V325M899.5 309V320M900.5 309V320M901.5 309V320M902.5 309V320M903.5 309V320M904.5 309V320M905.5 309V320M906.5 309V320M907.5 308V321M908.5 308V321M909.5 308V321M910.5 308V321M911.5 307V321M912.5 308V321M913.5 303V326M914.5 302V327M915.5 302V326M916.5 303V327M917.5 308V321M918.5 302V326M919.5 304V324M920.5 308V322M921.5 308V321M922.5 304V324M923.5 306V324M924.5 303V327M925.5 301V327M926.5 302V328M927.5 303V328M928.5 301V328M929.5 309V320M930.5 309V321M931.5 309V321M932.5 304V324M933.5 305V324M934.5 304V324M935.5 304V325M936.5 309V320M937.5 308V320M938.5 309V320M939.5 302V323M940.5 303V324M941.5 303V325M942.5 302V326M943.5 302V325M944.5 303V324M945.5 309V320M946.5 307V326M947.5 305V327M948.5 308V321M949.5 308V320M950.5 309V321M951.5 309V320M952.5 309V321M953.5 309V321M954.5 309V321M955.5 309V320M956.5 308V321M957.5 301V325M958.5 302V327M959.5 300V327M960.5 300V328M961.5 302V325M962.5 301V327M963.5 306V322M964.5 306V323M965.5 301V326M966.5 307V323M967.5 306V323M968.5 307V322M969.5 301V325M970.5 304V327M971.5 306V324M972.5 306V323M973.5 306V323M974.5 306V323M975.5 307V322M976.5 306V323M977.5 306V323M978.5 306V323M979.5 307V322M980.5 306V323M981.5 300V328M982.5 301V328M983.5 302V328M984.5 306V322M985.5 307V323M986.5 306V323M987.5 306V322M988.5 307V322M989.5 306V323M990.5 306V323M991.5 307V323M992.5 306V323M993.5 307V322M994.5 306V323M995.5 309V321M996.5 303V327M997.5 303V328M998.5 305V326M999.5 305V328M1000.5 309V321M1001.5 308V321M1002.5 308V320M1003.5 308V321M1004.5 309V321M1005.5 309V321M1006.5 309V321M1007.5 308V321M1008.5 308V321M1009.5 308V321M1010.5 308V321M1011.5 308V321M1012.5 308V321M1013.5 303V327M1014.5 304V324M1015.5 304V326M1016.5 308V321M1017.5 308V321M1018.5 308V320M1019.5 306V326M1020.5 307V326M1021.5 306V325M1022.5 306V328M1023.5 306V328M1024.5 308V321M1025.5 308V321M1026.5 308V321M1027.5 308V321M1028.5 309V321M1029.5 309V321M1030.5 309V320M1031.5 309V320M1032.5 309V320M1033.5 309V320M1034.5 309V320M1035.5 309V321M1036.5 309V320M1037.5 309V320M1038.5 309V321M1039.5 303V326M1040.5 302V326M1041.5 301V325M1042.5 309V320M1043.5 308V321M1044.5 308V321M1045.5 308V320M1046.5 309V320M1047.5 309V320M1048.5 309V321M1049.5 309V320M1050.5 302V325M1051.5 308V320M1052.5 308V320M1053.5 308V320M1054.5 308V321M1055.5 309V320M1056.5 308V320M1057.5 309V320M1058.5 303V327M1059.5 308V321M1060.5 309V320M1061.5 309V321M1062.5 309V320M1063.5 308V320M1064.5 308V321M1065.5 309V321M1066.5 308V321M1067.5 305V326M1068.5 304V326M1069.5 302V325M1070.5 302V326M1071.5 305V323M1072.5 305V323M1073.5 306V322M1074.5 305V322M1075.5 308V321M1076.5 307V321M1077.5 307V327M1078.5 306V327M1079.5 306V327M1080.5 307V322M1081.5 307V322M1082.5 307V322M1083.5 308V322M1084.5 307V321M1085.5 308V322M1086.5 307V322M1087.5 307V322M1088.5 307V322M1089.5 305V323M1090.5 307V322M1091.5 307V322M1092.5 307V322M1093.5 307V322M1094.5 307V322M1095.5 307V322M1096.5 304V323M1097.5 304V324M1098.5 306V323M1099.5 309V320M1100.5 309V320M1101.5 309V320M1102.5 309V320M1103.5 309V320M1104.5 304V327M1105.5 309V320M1106.5 309V320M1107.5 309V320M1108.5 309V320M1109.5 306V325M1110.5 305V325M1111.5 305V324M1112.5 312V317M1113.5 312V317M1114.5 312V317M1115.5 312V317M1116.5 305V324M1117.5 305V324M1118.5 306V325M1119.5 304V327M1120.5 309V320M1121.5 309V320M1122.5 304V324M1123.5 306V324M1124.5 305V323M1125.5 305V326M1126.5 307V322M1127.5 305V327M1128.5 303V328M1129.5 307V327M1130.5 306V322M1131.5 307V322M1132.5 303V326M1133.5 301V326M1134.5 303V326M1135.5 307V322M1136.5 307V321M1137.5 307V322M1138.5 307V321M1139.5 308V321M1140.5 307V322M1141.5 308V321M1142.5 308V321M1143.5 308V321M1144.5 308V322M1145.5 307V321M1146.5 307V321M1147.5 308V321M1148.5 308V322M1149.5 307V321M1150.5 308V321M1151.5 308V321M1152.5 308V321M1153.5 304V325M1154.5 304V326M1155.5 304V324M1156.5 309V320M1157.5 308V321M1158.5 309V320M1159.5 308V320M1160.5 308V321M1161.5 309V320M1162.5 308V320M1163.5 309V321M1164.5 309V320M1165.5 307V325M1166.5 307V325M1167.5 312V317M1168.5 312V317M1169.5 312V317M1170.5 312V317M1171.5 301V325M1172.5 301V324M1173.5 304V325M1174.5 301V324M1175.5 312V317M1176.5 312V317M1177.5 312V317M1178.5 312V317M1179.5 312V317M1180.5 312V317M1181.5 312V317M1182.5 312V317M1183.5 312V317M1184.5 312V317M1185.5 312V317M1186.5 312V317M1187.5 304V324M1188.5 304V324M1189.5 312V317M1190.5 312V317M1191.5 312V317M1192.5 308V321M1193.5 308V321M1194.5 308V321M1195.5 304V324M1196.5 302V324M1197.5 304V324M1198.5 308V321M1199.5 301V325M1200.5 301V323M1201.5 302V325M1202.5 307V321M1203.5 308V321M1204.5 308V321M1205.5 308V321M1206.5 308V322M1207.5 307V322M1208.5 305V326M1209.5 306V327M1210.5 304V329M1211.5 305V327M1212.5 306V323M1213.5 307V322M1214.5 307V322M1215.5 307V322M1216.5 307V322M1217.5 305V327M1218.5 303V328M1219.5 303V328M1220.5 305V331M1221.5 306V322M1222.5 307V322M1223.5 306V322M1224.5 306V322M1225.5 300V326M1226.5 298V325M1227.5 307V322M1228.5 307V322M1229.5 307V322M1230.5 306V324M1231.5 306V324M1232.5 306V324M1233.5 303V328M1234.5 303V328M1235.5 307V322M1236.5 307V321M1237.5 308V322M1238.5 307V321M1239.5 307V321M1240.5 307V322M1241.5 304V328M1242.5 304V327M1243.5 303V326M1244.5 303V328M1245.5 302V328M1246.5 301V329M1247.5 307V321M1248.5 308V322M1249.5 307V321M1250.5 307V322M1251.5 308V321M1252.5 308V321M1253.5 307V322M1254.5 307V322M1255.5 308V322M1256.5 303V326M1257.5 304V325M1258.5 307V322M1259.5 307V323M1260.5 307V322M1261.5 307V322M1262.5 303V327M1263.5 303V326M1264.5 301V330M1265.5 301V326M1266.5 307V322M1267.5 307V323M1268.5 306V323M1269.5 306V323M1270.5 306V322M1271.5 306V323M1272.5 307V323M1273.5 307V322M1274.5 302V327M1275.5 301V325M1276.5 302V327M1277.5 305V324M1278.5 305V325M1279.5 305V324M1280.5 304V325M1281.5 306V324M1282.5 304V324M1283.5 304V324M1284.5 306V323M1285.5 306V323M1286.5 306V323M1287.5 305V323M1288.5 305V323M1289.5 306V324M1290.5 306V323M1291.5 305V323M1292.5 306V324M1293.5 307V322M1294.5 308V321M1295.5 307V322M1296.5 302V328M1297.5 308V322M1298.5 307V321M1299.5 307V321M1300.5 307V322M1301.5 308V321M1302.5 307V322M1303.5 307V322M1304.5 307V322M1305.5 305V324M1306.5 305V324M1307.5 305V324M1308.5 305V324M1309.5 305V323M1310.5 307V323M1311.5 307V322M1312.5 307V323M1313.5 307V322M1314.5 302V330M1315.5 304V329M1316.5 303V329M1317.5 307V322M1318.5 307V322M1319.5 307V322M1320.5 306V323M1321.5 306V323M1322.5 307V323M1323.5 306V324M1324.5 306V322M1325.5 302V326M1326.5 307V323M1327.5 305V323M1328.5 305V322M1329.5 306V323M1330.5 306V323M1331.5 306V322M1332.5 306V323M1333.5 304V328M1334.5 303V327M1335.5 304V326M1336.5 307V322M1337.5 307V322M1338.5 308V322M1339.5 307V322M1340.5 307V322M1341.5 307V322M1342.5 307V322M1343.5 307V322M1344.5 307V323M1345.5 307V322M1346.5 306V323M1347.5 307V322M1348.5 307V322M1349.5 306V323M1350.5 307V323M1351.5 306V323M1352.5 307V322M1353.5 306V322M1354.5 307V322M1355.5 300V331M1356.5 300V329M1357.5 300V328M1358.5 300V330M1359.5 312V318M1360.5 311V318M1361.5 311V318M1362.5 311V318M1363.5 311V318M1364.5 311V317M1365.5 311V318M1366.5 298V327M1367.5 300V328M1368.5 301V327M1369.5 298V328M1370.5 311V318M1371.5 311V317M1372.5 311V317M1373.5 311V318M1374.5 301V325M1375.5 300V326M1376.5 311V318M1377.5 311V318M1378.5 311V318M1379.5 311V318M1380.5 311V318M1381.5 311V318M1382.5 311V318M1383.5 301V326M1384.5 311V318M1385.5 311V318M1386.5 307V322M1387.5 307V323M1388.5 303V331M1389.5 301V328M1390.5 302V326M1391.5 303V328M1392.5 302V326M1393.5 306V323M1394.5 307V323M1395.5 307V323M1396.5 307V322M1397.5 306V323M1398.5 306V324M1399.5 305V325M1400.5 299V325M1401.5 301V325M1402.5 301V325M1403.5 303V326M1404.5 305V329M1405.5 305V324M1406.5 306V324M1407.5 305V324M1408.5 298V325M1409.5 301V325M1410.5 304V324M1411.5 305V324M1412.5 305V323M1413.5 306V323M1414.5 305V324M1415.5 306V323M1416.5 304V323M1417.5 306V323M1418.5 305V324M1419.5 306V324M1420.5 305V324M1421.5 305V323M1422.5 308V321M1423.5 308V321M1424.5 308V322M1425.5 308V321M1426.5 308V322M1427.5 307V322M1428.5 308V321M1429.5 304V325M1430.5 304V326M1431.5 304V325M1432.5 303V326M1433.5 308V321M1434.5 308V322M1435.5 308V321M1436.5 308V322M1437.5 308V321M1438.5 307V323M1439.5 307V323M1440.5 307V322M1441.5 307V322M1442.5 307V322M1443.5 307V322M1444.5 306V322M1445.5 307V322M1446.5 307V322M1447.5 307V322M1448.5 306V323M1449.5 301V331M1450.5 298V329M1451.5 306V322M1452.5 307V322M1453.5 307V323M1454.5 307V322M1455.5 307V322M1456.5 299V329M1457.5 307V322M1458.5 307V322M1459.5 306V322M1460.5 307V323M1461.5 306V323M1462.5 306V323M1463.5 303V326M1464.5 307V323M1465.5 307V322M1466.5 306V323M1467.5 306V323M1468.5 306V323M1469.5 301V328M1470.5 301V328M1471.5 302V329M1472.5 300V329M1473.5 301V331M1474.5 301V331M1475.5 306V324M1476.5 305V325M1477.5 305V324M1478.5 304V325M1479.5 305V325M1480.5 305V324M1481.5 302V328M1482.5 302V327M1483.5 301V329M1484.5 304V323M1485.5 305V324M1486.5 306V324M1487.5 305V324M1488.5 305V324M1489.5 305V324M1490.5 305V323M1491.5 307V323M1492.5 306V322M1493.5 307V322M1494.5 302V326M1495.5 303V326M1496.5 301V325M1497.5 304V326M1498.5 303V325M1499.5 307V322M1500.5 307V322M1501.5 307V322M1502.5 307V322M1503.5 304V323M1504.5 307V322M1505.5 307V322M1506.5 307V322M1507.5 307V321M1508.5 308V321M1509.5 307V321M1510.5 307V321M1511.5 308V322M1512.5 308V321M1513.5 308V321M1514.5 308V321M1515.5 308V320M1516.5 308V321M1517.5 305V325M1518.5 309V321M1519.5 308V321M1520.5 305V323M1521.5 306V320M1522.5 307V320M1523.5 306V320M1524.5 306V321M1525.5 310V318M1526.5 311V319M1527.5 311V318M1528.5 311V318M1529.5 311V318M1530.5 307V320M1531.5 307V321M1532.5 306V320M1533.5 311V318M1534.5 311V318M1535.5 311V318M1536.5 311V318M1537.5 306V323M1538.5 307V322M1539.5 306V323M1540.5 307V322M1541.5 310V319M1542.5 309V320M1543.5 308V320M1544.5 308V320M1545.5 307V320M1546.5 308V320M1547.5 311V318M1548.5 311V318M1549.5 310V319M1550.5 307V320M1551.5 307V321M1552.5 307V321M1553.5 307V322M1554.5 310V319M1555.5 310V319M1556.5 310V320M1557.5 310V319M1558.5 310V319M1559.5 310V319M1560.5 308V321M1561.5 307V321M1562.5 310V319M1563.5 310V319M1564.5 310V319M1565.5 310V319M1566.5 310V319M1567.5 310V319M1568.5 307V320M1569.5 307V322M1570.5 310V319M1571.5 308V323M1572.5 306V322M1573.5 309V320M1574.5 309V320M1575.5 309V320M1576.5 310V319M1577.5 310V320M1578.5 309V319M1579.5 309V319M1580.5 309V320M1581.5 309V320M1582.5 309V320M1583.5 309V321M1584.5 303V329M1585.5 304V329M1586.5 304V327M1587.5 301V328M1588.5 307V322M1589.5 306V323M1590.5 307V323M1591.5 305V324M1592.5 300V329M1593.5 302V330M1594.5 305V323M1595.5 304V323M1596.5 305V324M1597.5 304V324M1598.5 305V323M1599.5 306V324M1600.5 304V324M1601.5 304V327M1602.5 304V327M1603.5 302V327M1604.5 304V326M1605.5 301V328M1606.5 306V324M1607.5 305V324M1608.5 305V323M1609.5 311V318M1610.5 311V318M1611.5 311V318M1612.5 311V318M1613.5 311V318M1614.5 300V325M1615.5 302V330M1616.5 311V318M1617.5 311V318M1618.5 311V318M1619.5 311V318M1620.5 299V327M1621.5 298V329M1622.5 301V329M1623.5 303V329M1624.5 299V331M1625.5 311V318M1626.5 311V318M1627.5 311V318M1628.5 311V318M1629.5 311V318M1630.5 311V318M1631.5 307V322M1632.5 308V321M1633.5 308V322M1634.5 307V322M1635.5 307V321M1636.5 300V329M1637.5 297V328M1638.5 297V329M1639.5 307V322M1640.5 307V322M1641.5 307V322M1642.5 300V326M1643.5 300V326M1644.5 300V329M1645.5 297V327M1646.5 296V327M1647.5 297V327M1648.5 307V322M1649.5 307V323M1650.5 307V322M1651.5 307V323M1652.5 307V322M1653.5 307V322M1654.5 307V322M1655.5 306V323M1656.5 301V332M1657.5 298V331M1658.5 301V329M1659.5 306V324M1660.5 305V324M1661.5 306V323M1662.5 306V323M1663.5 305V324M1664.5 303V327M1665.5 301V327M1666.5 306V323M1667.5 305V323M1668.5 308V322M1669.5 308V321M1670.5 308V322M1671.5 307V321M1672.5 307V322M1673.5 307V322M1674.5 301V327M1675.5 301V327M1676.5 306V323M1677.5 299V329M1678.5 301V330M1679.5 302V329M1680.5 302V331M1681.5 301V332M1682.5 303V328M1683.5 306V323M1684.5 306V323M1685.5 306V323M1686.5 306V323M1687.5 306V324M1688.5 305V323M1689.5 306V324M1690.5 306V323M1691.5 306V323M1692.5 306V323M1693.5 305V323M1694.5 306V322M1695.5 298V330M1696.5 299V330M1697.5 299V329M1698.5 306V324M1699.5 306V324M1700.5 303V324M1701.5 301V325M1702.5 306V324M1703.5 298V330M1704.5 298V331M1705.5 303V328M1706.5 304V330M1707.5 303V331M1708.5 304V331M1709.5 300V328M1710.5 307V322M1711.5 307V322M1712.5 307V323M1713.5 300V329M1714.5 297V329M1715.5 301V329M1716.5 307V323M1717.5 307V322M1718.5 307V323M1719.5 307V323M1720.5 306V323M1721.5 307V322M1722.5 306V324M1723.5 305V323M1724.5 305V324M1725.5 305V324M1726.5 305V324M1727.5 306V323M1728.5 305V324M1729.5 305V324M1730.5 305V323M1731.5 303V333M1732.5 305V324M1733.5 305V324M1734.5 305V324M1735.5 305V323M1736.5 306V324M1737.5 305V324M1738.5 306V323M1739.5 302V328M1740.5 304V325M1741.5 304V326M1742.5 305V324M1743.5 303V327M1744.5 304V326M1745.5 302V326M1746.5 303V326M1747.5 305V324M1748.5 305V324M1749.5 306V323M1750.5 304V324M1751.5 305V324M1752.5 304V324M1753.5 304V324M1754.5 306V324M1755.5 305V324M1756.5 302V326M1757.5 301V327M1758.5 305V324M1759.5 305V324M1760.5 306V324M1761.5 298V326M1762.5 305V324M1763.5 306V323M1764.5 306V324M1765.5 300V332M1766.5 302V332M1767.5 306V324M1768.5 305V324M1769.5 305V323M1770.5 306V323M1771.5 306V323M1772.5 301V326M1773.5 305V323M1774.5 305V323M1775.5 305V324M1776.5 305V323M1777.5 306V324M1778.5 300V327M1779.5 305V324M1780.5 306V323M1781.5 305V324M1782.5 306V324M1783.5 305V324M1784.5 306V322M1785.5 307V322M1786.5 307V323M1787.5 306V323M1788.5 307V323M1789.5 307V323M1790.5 306V323M1791.5 306V323M1792.5 306V323M1793.5 306V322M1794.5 307V322M1795.5 306V322M1796.5 307V322M1797.5 307V322M1798.5 301V332M1799.5 301V331M1800.5 302V332M1801.5 303V329M1802.5 306V323M1803.5 307V323M1804.5 305V324M1805.5 304V326M1806.5 303V328M1807.5 305V324M1808.5 305V324M1809.5 305V324M1810.5 306V324M1811.5 305V323M1812.5 306V323"/>
<path stroke-width="1" shape-rendering="crispEdges" d="M479.5 288V334M480.5 295V326M481.5 294V334M491.5 298V325M492.5 292V336M493.5 293V338M492.5 289V334M493.5 295V334M496.5 300V328M498.5 298V333M506.5 294V332M508.5 286V334M509.5 294V336M510.5 298V332M510.5 288V345M511.5 299V325M523.5 295V332M527.5 285V345M528.5 294V327M532.5 290V338M533.5 286V344M534.5 297V326M535.5 287V335M536.5 294V330M537.5 291V339M538.5 289V332M539.5 292V333M540.5 297V333M542.5 284V341M543.5 299V326M543.5 290V341M545.5 292V331M546.5 299V329M550.5 297V327M551.5 296V331M554.5 288V339M555.5 300V327M556.5 296V327M560.5 293V336M561.5 288V336M562.5 285V335M565.5 296V331M566.5 299V332M566.5 288V336M584.5 297V326M585.5 288V337M590.5 290V343M591.5 298V327M601.5 287V336M602.5 298V333M605.5 295V327M611.5 286V334M612.5 291V331M616.5 288V335M617.5 296V327M623.5 285V340M624.5 293V335M625.5 284V335M633.5 291V334M634.5 288V340M635.5 285V343M635.5 295V336M636.5 296V328M637.5 295V329M638.5 287V345M651.5 283V351M652.5 299V329M653.5 296V327M662.5 287V345M663.5 295V338M664.5 292V332M665.5 297V330M663.5 286V336M664.5 284V341M665.5 290V340M666.5 298V326M671.5 285V338M672.5 294V328M673.5 300V328M674.5 293V332M675.5 286V345M676.5 285V344M679.5 296V335M681.5 294V335M690.5 294V336M691.5 297V330M693.5 288V334M694.5 294V330M701.5 284V333M702.5 296V326M703.5 285V340M704.5 295V327M708.5 283V338M709.5 289V338M710.5 297V326M709.5 284V334M710.5 292V336M711.5 290V338M712.5 289V333M710.5 297V335M711.5 290V341M712.5 296V337M713.5 294V330M726.5 286V333M727.5 288V346M728.5 296V326M729.5 294V328M728.5 288V332M729.5 290V339M739.5 293V340M740.5 286V340M745.5 286V343M746.5 287V338M748.5 295V333M749.5 291V340M750.5 298V332M751.5 287V337M755.5 287V342M772.5 294V338M773.5 300V326M774.5 284V349M778.5 289V341M779.5 290V337M781.5 300V332M782.5 299V333M783.5 289V337M784.5 289V337M784.5 290V333M785.5 289V343M786.5 285V346M787.5 283V341M787.5 284V340M788.5 299V324M829.5 301V326M855.5 303V325M856.5 299V328M857.5 301V324M858.5 292V330M887.5 298V326M888.5 296V326M899.5 292V338M905.5 294V332M906.5 299V326M908.5 303V326M909.5 291V342M910.5 292V330M911.5 292V331M933.5 293V330M934.5 301V330M943.5 295V328M944.5 292V337M945.5 298V327M946.5 294V327M947.5 302V328M962.5 292V332M963.5 291V337M963.5 288V333M964.5 299V326M964.5 290V336M965.5 300V329M966.5 289V344M967.5 290V336M972.5 291V340M979.5 295V337M980.5 289V331M986.5 292V329M987.5 290V341M991.5 293V333M992.5 300V332M997.5 291V343M1000.5 289V339M1003.5 289V343M1004.5 298V326M1005.5 292V331M1006.5 298V327M1007.5 298V330M1008.5 301V324M1058.5 302V324M1091.5 297V328M1092.5 299V332M1093.5 302V325M1103.5 301V326M1106.5 295V332M1132.5 304V323M1133.5 294V337M1134.5 293V333M1149.5 300V326M1167.5 303V322M1168.5 297V330M1169.5 293V340M1178.5 294V328M1179.5 294V329M1180.5 296V326M1196.5 300V332M1197.5 298V329M1198.5 300V323M1214.5 292V339M1220.5 287V347M1221.5 287V336M1222.5 296V328M1223.5 288V342M1222.5 290V342M1234.5 290V331M1235.5 290V336M1236.5 287V342M1236.5 288V336M1238.5 290V337M1241.5 292V335M1242.5 297V334M1243.5 290V336M1242.5 295V333M1243.5 287V340M1244.5 299V324M1245.5 293V328M1244.5 292V341M1250.5 289V337M1251.5 301V330M1252.5 290V334M1251.5 290V343M1252.5 288V340M1256.5 289V332M1257.5 301V323M1259.5 299V330M1260.5 293V329M1262.5 298V325M1263.5 289V337M1264.5 299V330M1265.5 301V328M1266.5 291V332M1267.5 286V344M1268.5 293V337M1266.5 301V323M1267.5 297V333M1268.5 292V338M1271.5 290V343M1272.5 289V331M1273.5 292V333M1272.5 289V331M1273.5 291V329M1274.5 297V328M1275.5 293V329M1276.5 288V343M1285.5 291V339M1286.5 287V341M1287.5 297V334M1288.5 288V333M1290.5 296V329M1291.5 292V330M1292.5 288V333M1293.5 292V337M1294.5 293V338M1295.5 291V333M1297.5 294V337M1298.5 292V332M1300.5 288V343M1301.5 299V329M1302.5 300V331M1303.5 292V329M1324.5 300V326M1343.5 299V332M1344.5 289V337M1345.5 290V338M1346.5 290V332M1348.5 292V338M1349.5 293V331M1349.5 290V334M1350.5 299V331M1351.5 300V330M1352.5 300V330M1370.5 296V330M1371.5 287V339M1371.5 299V326M1374.5 290V342M1389.5 287V332M1400.5 299V326M1401.5 297V333M1408.5 290V334M1409.5 292V341M1411.5 297V333M1412.5 287V334M1413.5 290V335M1419.5 287V334M1420.5 298V333M1431.5 288V337M1433.5 287V338M1434.5 290V333M1435.5 295V333M1436.5 287V344M1437.5 291V335M1438.5 295V329M1439.5 293V338M1440.5 295V327M1441.5 293V336M1439.5 290V336M1440.5 298V328M1456.5 293V329M1457.5 299V328M1458.5 300V324M1459.5 300V327M1462.5 299V329M1473.5 298V325M1476.5 295V338M1477.5 293V332M1478.5 295V328M1500.5 297V335M1506.5 296V333M1507.5 295V327M1530.5 305V321M1531.5 307V320M1587.5 293V335M1588.5 296V328M1590.5 292V332M1591.5 297V326M1650.5 294V339M1685.5 295V331M1686.5 285V342M1687.5 296V329M1700.5 292V330M1701.5 286V337M1702.5 298V327M1720.5 294V330M1726.5 299V326M1727.5 295V332M1729.5 297V335M1740.5 287V343M1778.5 288V345M1779.5 297V327M1795.5 286V342M1796.5 288V345M1797.5 285V350M1798.5 288V334M1800.5 296V336"/>
<path stroke-width="1.5" d="M479.5 264V366M488.5 281V338M492.5 266V363M505.5 252V377M508.5 280V351M514.5 261V368M517.5 257V370M519.5 269V345M547.5 292V337M556.5 221V420M571.5 263V373M595.5 284V354M617.5 256V381M622.5 288V342M632.5 292V348M647.5 274V356M652.5 269V361M659.5 265V364M670.5 274V354M683.5 276V363M687.5 266V372M693.5 266V362M699.5 266V360M704.5 289V345M715.5 265V363M721.5 283V348M742.5 264V365M746.5 256V383M763.5 252V380M768.5 231V401M779.5 249V382M789.5 297V337M800.5 240V389M804.5 267V353M502.5 289V345M511.5 292V341M529.5 298V334M582.5 298V334M587.5 295V337M612.5 298V340M638.5 298V334M665.5 295V345M677.5 292V340M695.5 289V345M724.5 292V342M760.5 283V345M783.5 292V340M792.5 298V337M804.5 267V353M816.5 295V342M842.5 267V359M847.5 295V325M856.5 285V346M880.5 293V336M882.5 289V341M900.5 301V328M930.5 293V339M964.5 300V334M968.5 277V351M976.5 266V363M994.5 268V361M996.5 270V357M1001.5 267V362M1053.5 298V334M1084.5 293V327M1108.5 304V331M1126.5 301V326M1173.5 283V345M1210.5 291V341M1217.5 256V373M1222.5 297V331M1246.5 268V362M1248.5 277V351M1259.5 257V374M1263.5 287V351M1267.5 295V337M1272.5 294V335M1275.5 272V357M1277.5 275V354M1286.5 289V335M1290.5 271V359M1294.5 297V354M1306.5 267V372M1309.5 259V371M1318.5 292V337M1328.5 283V342M1334.5 273V357M1339.5 269V360M1350.5 275V354M1363.5 278V350M1370.5 249V380M1372.5 265V363M1378.5 297V334M1386.5 275V354M1398.5 251V376M1401.5 245V384M1414.5 282V346M1421.5 289V342M1426.5 258V371M1446.5 279V351M1471.5 242V388M1501.5 301V329M1606.5 298V329M1649.5 293V335M1672.5 300V331M1743.5 298V333M1771.5 297V334M1775.5 196V316"/>
</g>
<polyline fill="none" stroke="#7b7b7b" stroke-width="3.2" points="474 313.9 480 314.9 486 314.4 492 314.9 498 314.5 504 314.5 510 314.1 516 314.7 522 314.4 528 313.9 534 314.4 540 315.1 546 314.2 552 314.5 558 314.6 564 314.7 570 314.1 576 315.1 582 314.2 588 314.9 594 314.5 600 314.7 606 314.1 612 314.4 618 314.3 624 314.1 630 314.0 636 314.3 642 314.8 648 313.9 654 314.6 660 314.7 666 314.0 672 314.9 678 314.7 684 314.7 690 315.0 696 314.6 702 314.1 708 314.6 714 314.4 720 314.3 726 314.8 732 313.9 738 314.8 744 313.9 750 314.3 756 314.0 762 314.4 768 314.2 774 314.7 780 314.4 786 314.8 792 314.1 798 314.0 804 314.2 810 314.6 816 314.5 822 315.0 828 314.1 834 315.0 840 314.9 846 314.9 852 314.0 858 314.7 864 314.0 870 315.0 876 314.1 882 314.4 888 314.3 894 314.0 900 314.5 906 314.6 912 314.1 918 314.0 924 314.0 930 314.3 936 315.0 942 314.1 948 314.5 954 314.5 960 314.4 966 315.0 972 314.3 978 314.3 984 315.1 990 314.0 996 314.8 1002 314.7 1008 314.6 1014 314.5 1020 314.4 1026 314.2 1032 314.6 1038 314.4 1044 314.7 1050 314.8 1056 314.6 1062 314.6 1068 314.0 1074 314.4 1080 314.4 1086 314.3 1092 314.3 1098 314.4 1104 314.6 1110 314.7 1116 314.8 1122 314.7 1128 313.9 1134 314.9 1140 314.8 1146 314.2 1152 315.0 1158 314.9 1164 314.1 1170 314.0 1176 314.0 1182 314.9 1188 314.0 1194 314.8 1200 314.4 1206 314.5 1212 314.3 1218 314.7 1224 315.1 1230 314.6 1236 314.4 1242 314.5 1248 314.5 1254 314.5 1260 314.3 1266 314.8 1272 314.5 1278 314.3 1284 314.5 1290 314.8 1296 314.7 1302 314.4 1308 315.1 1314 314.0 1320 314.5 1326 314.3 1332 315.1 1338 315.0 1344 314.5 1350 315.1 1356 314.9 1362 314.4 1368 314.7 1374 314.9 1380 314.2 1386 314.7 1392 314.1 1398 314.8 1404 314.8 1410 314.3 1416 314.6 1422 314.7 1428 314.6 1434 314.5 1440 314.1 1446 315.1 1452 314.9 1458 314.6 1464 314.1 1470 314.0 1476 314.9 1482 315.0 1488 314.7 1494 313.9 1500 314.3 1506 314.5 1512 314.2 1518 314.0 1524 314.7 1530 315.0 1536 314.1 1542 314.4 1548 315.0 1554 314.0 1560 314.2 1566 314.0 1572 315.1 1578 314.3 1584 314.0 1590 314.4 1596 314.4 1602 315.0 1608 314.1 1614 314.3 1620 314.1 1626 314.7 1632 314.1 1638 314.5 1644 314.5 1650 315.0 1656 314.9 1662 314.4 1668 313.9 1674 314.7 1680 314.2 1686 314.9 1692 314.3 1698 314.1 1704 314.5 1710 315.1 1716 314.9 1722 315.0 1728 314.7 1734 314.0 1740 314.3 1746 314.9 1752 314.1 1758 314.7 1764 315.0 1770 314.5 1776 314.4 1782 314.0 1788 314.8 1794 314.2 1800 314.0 1806 314.3 1812 314.3"/>
</svg>
</body></html>
